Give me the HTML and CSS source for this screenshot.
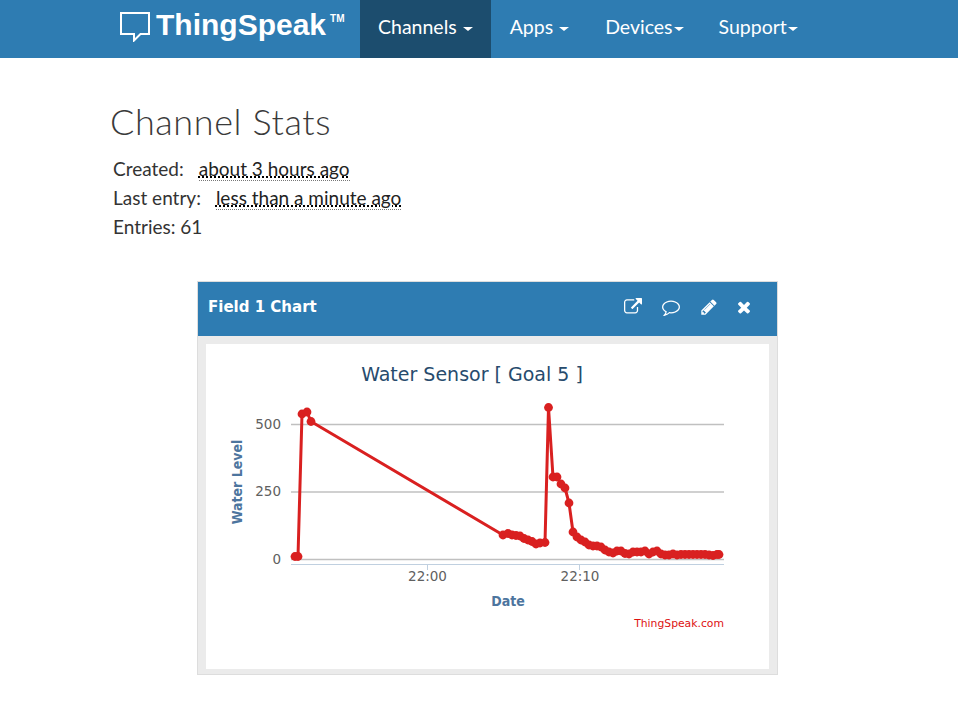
FILE: index.html
```html
<!DOCTYPE html>
<html lang="en">
<head>
    <meta charset="UTF-8">
    <meta name="viewport" content="width=device-width, initial-scale=1.0">
    <title>Channel Stats - ThingSpeak</title>
    <link rel="stylesheet" href="styles.css">
</head>
<body>
    <header class="navbar">
        <a class="brand" href="#">
            <svg class="brand-icon" viewBox="0 0 30 30"><path d="M1 1H29V22H20.5L14 28.5V22H1Z"/></svg>
            <span class="brand-name">ThingSpeak</span><span class="brand-tm">TM</span>
        </a>
        <nav class="nav">
            <a class="nav-item active nav-channels" href="#">Channels <span class="caret"></span></a>
            <a class="nav-item nav-apps" href="#">Apps <span class="caret"></span></a>
            <a class="nav-item nav-devices" href="#">Devices<span class="caret"></span></a>
            <a class="nav-item nav-support" href="#">Support<span class="caret"></span></a>
        </nav>
    </header>
    <main class="content">
        <h1>Channel Stats</h1>
        <ul class="stats">
            <li><span class="stat-label">Created:</span><abbr class="stat-time">about 3 hours ago</abbr></li>
            <li><span class="stat-label">Last entry:</span><abbr class="stat-time">less than a minute ago</abbr></li>
            <li>Entries: 61</li>
        </ul>
        <section class="panel">
            <div class="panel-head">
                <h2>Field 1 Chart</h2>
                <div class="panel-tools">
                    <svg viewBox="0 0 1792 1792"><path d="M1408 928v320q0 119-84.500 203.500t-203.500 84.500h-832q-119 0-203.500-84.500t-84.500-203.500v-832q0-119 84.500-203.500t203.500-84.500h704q14 0 23 9t9 23v64q0 14-9 23t-23 9h-704q-66 0-113 47t-47 113v832q0 66 47 113t113 47h832q66 0 113-47t47-113v-320q0-14 9-23t23-9h64q14 0 23 9t9 23zm384-864v512q0 26-19 45t-45 19-45-19l-176-176-652 652q-10 10-23 10t-23-10l-114-114q-10-10-10-23t10-23l652-652-176-176q-19-19-19-45t19-45 45-19h512q26 0 45 19t19 45z"/></svg>
                    <svg viewBox="0 0 1792 1792"><path d="M896 384q-204 0-381.500 69.500t-282 187.500-104.500 255q0 112 71.500 213.500t201.500 175.500l87 50-27 96q-24 91-70 172 152-63 275-171l43-38 57 6q69 8 130 8 204 0 381.500-69.500t282-187.500 104.500-255-104.500-255-282-187.500-381.500-69.500zm896 512q0 174-120 321.500t-326 233-450 85.500q-70 0-145-8-198 175-460 242-49 14-114 22h-5q-15 0-27-10.500t-16-27.500v-1q-3-4-.5-12t2-10 4.500-9.500l6-9 7-8.500 8-9q7-8 31-34.500t34.500-38 31-39.500 32.500-51 27-59 26-76q-157-89-247.500-220t-90.500-281q0-174 120-321.500t326-233 450-85.500 450 85.500 326 233 120 321.500z"/></svg>
                    <svg viewBox="0 0 1792 1792"><path d="M491 1536l91-91-235-235-91 91v107h128v128h107zm523-928q0-22-22-22-10 0-17 7l-542 542q-7 7-7 17 0 22 22 22 10 0 17-7l542-542q7-7 7-17zm-54-192l416 416-832 832h-416v-416zm683 96q0 53-37 90l-166 166-416-416 166-165q36-38 90-38 53 0 91 38l235 234q37 39 37 91z"/></svg>
                    <svg class="tool-close" viewBox="0 0 1792 1792"><path d="M1490 1322q0 40-28 68l-136 136q-28 28-68 28t-68-28l-294-294-294 294q-28 28-68 28t-68-28l-136-136q-28-28-28-68t28-68l294-294-294-294q-28-28-28-68t28-68l136-136q28-28 68-28t68 28l294 294 294-294q28-28 68-28t68 28l136 136q28 28 28 68t-28 68l-294 294 294 294q28 28 28 68z"/></svg>
                </div>
            </div>
            <div class="panel-body">
                <!-- viewBox uses page coordinates so points can be read straight off the picture -->
                <svg class="chart" viewBox="206 344 563 325">
                    <defs>
                        <marker id="dot" markerUnits="userSpaceOnUse" viewBox="-5 -5 10 10" markerWidth="10" markerHeight="10">
                            <circle r="4.400" fill="#d92020"/>
                        </marker>
                    </defs>
                    <text class="chart-title" x="472" y="381" text-anchor="middle">Water Sensor [ Goal 5 ]</text>
                    <g class="grid">
                        <line x1="291" x2="724" y1="424.500" y2="424.500"/>
                        <line x1="291" x2="724" y1="492" y2="492"/>
                        <line x1="291" x2="724" y1="559.500" y2="559.500"/>
                    </g>
                    <g class="axis">
                        <line x1="291" x2="724" y1="564.500" y2="564.500"/>
                        <line x1="427.500" x2="427.500" y1="564" y2="570"/>
                        <line x1="579.500" x2="579.500" y1="564" y2="570"/>
                    </g>
                    <g class="tick-label">
                        <text x="281" y="429" text-anchor="end">500</text>
                        <text x="281" y="496" text-anchor="end">250</text>
                        <text x="281" y="564" text-anchor="end">0</text>
                        <text x="427.500" y="581" text-anchor="middle">22:00</text>
                        <text x="580" y="581" text-anchor="middle">22:10</text>
                    </g>
                    <text class="axis-title" transform="translate(242 482) rotate(-90)" text-anchor="middle">Water Level</text>
                    <text class="axis-title" x="508" y="606" text-anchor="middle">Date</text>
                    <polyline class="series" points="295,556.500 298,556.500 302,414 307,412 311,421.500 503,535 508,533.500 512,535 516,535.500 520,536 524,538.500 528,540 532,541.500 536,544 540,543 545,542.500 548.500,407.500 553,477 557,477 561,484 565,488 569,503 573,532 577,537 581,540 585,542 589,545 593,546 597,546 601,547 605,550 609,552 613,553 617,551 621,551 625,553.500 629,554 633,552 637,552 641,552 645,551 649,554 653,552 657,551 661,554 665,555 669,555 673,554 677,555 681,554.500 685,554.500 689,554.500 693,554.500 697,554.500 701,554.500 705,554.500 709,555 713,555.500 717,554.500 719,554.500"/>
                    <text class="credits" x="724" y="627" text-anchor="end">ThingSpeak.com</text>
                </svg>
            </div>
        </section>
    </main>
</body>
</html>
```

FILE: styles.css
```css
body {
    margin: 0;
    background: #FFFFFF;
    color: #333333;
    font-family: 'Lato', 'Noto Sans', sans-serif;
}
.navbar {
    display: flex;
    height: 58px;
    padding-left: 120px;
    background: #2E7CB2;
}
.brand {
    display: flex;
    width: 240px;
    color: #FFFFFF;
    text-decoration: none;
}
.brand-icon {
    width: 30px;
    height: 30px;
    margin-top: 12px;
    fill: none;
    stroke: #FFFFFF;
    stroke-width: 2;
}
.brand-name {
    margin-left: 6px;
    font-family: 'Liberation Sans', sans-serif;
    font-size: 30px;
    font-weight: 700;
    line-height: 50px;
}
.brand-tm {
    margin-left: 4px;
    font-family: 'Liberation Sans', sans-serif;
    font-size: 10px;
    font-weight: 700;
    line-height: 38px;
}
.nav {
    display: flex;
}
.nav-item {
    display: block;
    padding: 0 18px;
    color: #FFFFFF;
    font-size: 19.500px;
    line-height: 54px;
    text-decoration: none;
}
.nav-apps {
    padding: 0 18px 0 19px;
}
.nav-devices {
    padding-right: 17px;
}
.nav-item.active {
    background: #1C4D6E;
}
.caret {
    display: inline-block;
    margin-left: 1px;
    vertical-align: middle;
    border-top: 4px solid #FFFFFF;
    border-left: 5px solid transparent;
    border-right: 5px solid transparent;
}
.content {
    padding-left: 110px;
}
h1 {
    margin: 42px 0 0;
    color: #3A3A3A;
    font-size: 36px;
    font-weight: 300;
    letter-spacing: 0.6px;
    line-height: 42px;
}
.stats {
    margin: 12px 0 0 3px;
    padding: 0;
    list-style: none;
    font-size: 19px;
    line-height: 29px;
}
.stat-label {
    margin-right: 15px;
}
.stat-time {
    color: #222222;
    border-bottom: 1px dotted #777777;
    text-decoration: underline dotted #000000;
}
.panel {
    width: 579px;
    margin: 40px 0 0 87px;
    border: 1px solid #DDDDDD;
    background: #EBEBEB;
}
.panel-head {
    display: flex;
    align-items: center;
    justify-content: space-between;
    height: 50px;
    padding: 0 24px 4px 10px;
    background: #2E7CB2;
}
.panel-head h2 {
    margin: 0;
    color: #FFFFFF;
    font-family: 'DejaVu Sans', sans-serif;
    font-size: 15px;
    font-weight: 700;
}
.panel-tools {
    display: flex;
    gap: 20px;
}
.panel-tools svg {
    width: 18px;
    height: 18px;
    fill: #FFFFFF;
}
.panel-tools .tool-close {
    margin-left: -3px;
}
.panel-body {
    padding: 8px 8px 5px;
}
.chart {
    display: block;
    width: 563px;
    height: 325px;
    background: #FFFFFF;
    font-family: 'DejaVu Sans', sans-serif;
}
.chart-title {
    fill: #274B6D;
    font-size: 19px;
}
.grid line {
    stroke: #C0C0C0;
    stroke-width: 1.5;
}
.axis line {
    stroke: #C0D0E0;
}
.tick-label text {
    fill: #606060;
    font-size: 13.500px;
}
.axis-title {
    fill: #4D759E;
    font-family: 'DejaVu Sans Condensed', 'DejaVu Sans', sans-serif;
    font-size: 14px;
    font-weight: 700;
}
.series {
    fill: none;
    stroke: #D92020;
    stroke-width: 3;
    stroke-linejoin: round;
    marker-start: url(#dot);
    marker-mid: url(#dot);
    marker-end: url(#dot);
}
.credits {
    fill: #DD1111;
    font-size: 10.800px;
}
```
